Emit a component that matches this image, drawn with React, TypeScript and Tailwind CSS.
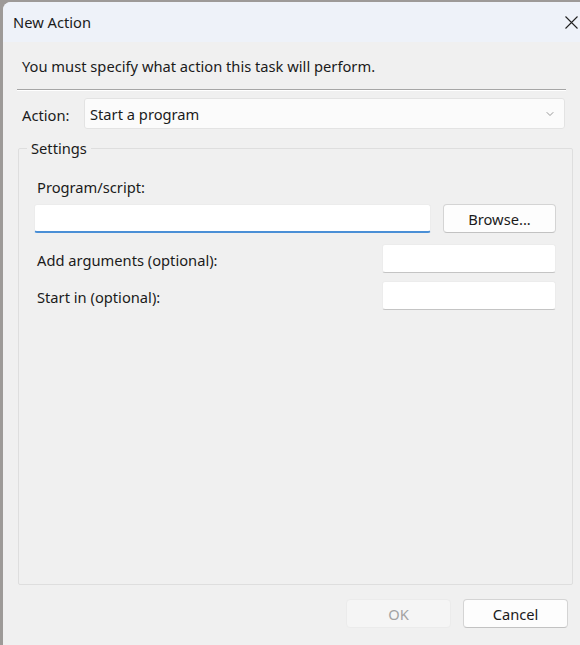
import { ChevronDown } from 'lucide-react';

const font = { fontFamily: '"Noto Sans", "Segoe UI", sans-serif' };

function Field({ width, focused }: { width: string; focused?: boolean }) {
  return (
    <div
      className={`h-[29px] ${width} rounded-[3px] bg-white border border-[#ececec] ${
        focused ? 'border-b-2 border-b-[#4a8fd6]' : 'border-b-[#c4c4c4]'
      }`}
    />
  );
}

function DialogButton({ label, disabled, width = 'w-[105px]' }: { label: string; disabled?: boolean; width?: string }) {
  return (
    <button
      disabled={disabled}
      className={`h-[29px] ${width} rounded-[4px] border text-[14.7px] leading-[20px] ${
        disabled
          ? 'bg-[#f5f5f5] border-[#ebebeb] text-[#a3a3a3]'
          : 'bg-[#fdfdfd] border-[#d4d4d4] border-b-[#c2c2c2] text-[#1b1b1b]'
      }`}
    >
      {label}
    </button>
  );
}

export default function App() {
  return (
    <div className="w-[580px] h-[645px] bg-[#9d9a98] pl-[3px] pt-[2px] overflow-hidden" style={font}>
      <div className="w-[600px] h-[660px] rounded-tl-[8px] bg-[#f0f0f0] flex flex-col text-[#1b1b1b] overflow-hidden text-[14.7px] leading-[20px]">
        {/* Title bar */}
        <div className="h-[40px] bg-[#eef2f9] flex items-center justify-between pl-[10px] pr-[25px] shrink-0">
          <span>New Action</span>
          <svg width="13" height="13" viewBox="0 0 13 13" className="text-[#222]">
            <path d="M0.5 0.5 L12.5 12.5 M12.5 0.5 L0.5 12.5" stroke="currentColor" strokeWidth="1.1" />
          </svg>
        </div>

        <div className="w-[577px] flex flex-col px-[14px]">
          <p className="mt-[14px] pl-[5px]">You must specify what action this task will perform.</p>
          <div className="mt-[13px] border-t border-[#a6a6a6] border-b border-b-white" />

          {/* Action row */}
          <div className="flex items-center mt-[7px]">
            <span className="pl-[5px] w-[67px] pt-[2px]">Action:</span>
            <div className="flex-1 h-[31px] mr-[1px] rounded-[3px] bg-[#fbfbfb] border border-[#e3e3e3] flex items-center justify-between pl-[5px] pr-[8px]">
              <span>Start a program</span>
              <ChevronDown className="w-[12px] h-[12px] text-[#777]" strokeWidth={1.5} />
            </div>
          </div>

          {/* Settings group */}
          <div className="relative mt-[19px] ml-[1px] h-[437px] w-[555px] border border-[#dedede] rounded-[2px]">
            <span className="absolute -top-[11px] left-[8px] px-[4px] bg-[#f0f0f0]">Settings</span>
            <div className="flex flex-col pl-[15px] pr-[16px] pt-[27px]">
              <span className="pl-[3px] pt-[1px]">Program/script:</span>
              <div className="flex items-center justify-between mt-[7px]">
                <Field width="w-[397px]" focused />
                <DialogButton label="Browse..." width="w-[113px]" />
              </div>
              <div className="flex items-center justify-between mt-[11px]">
                <span className="pl-[3px] pt-[2px]">Add arguments (optional):</span>
                <Field width="w-[174px]" />
              </div>
              <div className="flex items-center justify-between mt-[8px]">
                <span className="pl-[3px] pt-[2px]">Start in (optional):</span>
                <Field width="w-[174px]" />
              </div>
            </div>
          </div>

          {/* Footer */}
          <div className="flex justify-end gap-[12px] mt-[14px] w-[551px]">
            <DialogButton label="OK" disabled />
            <DialogButton label="Cancel" />
          </div>
        </div>
      </div>
    </div>
  );
}
